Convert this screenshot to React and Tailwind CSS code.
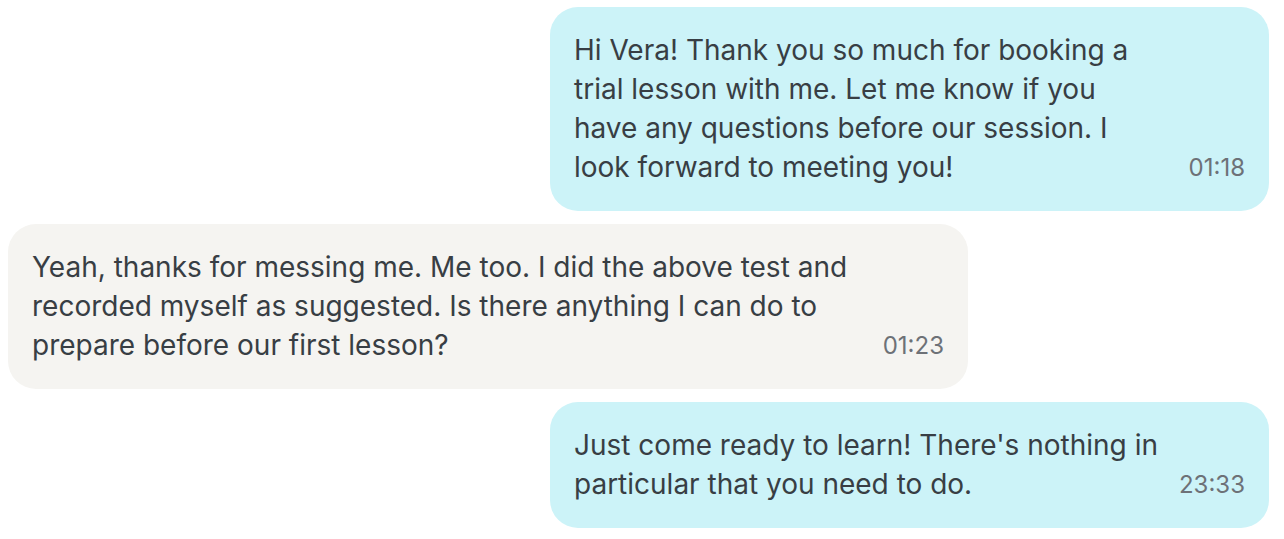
const messages = [
  {
    mine: true,
    time: "01:18",
    lines: [
      "Hi Vera! Thank you so much for booking a",
      "trial lesson with me. Let me know if you",
      "have any questions before our session. I",
      "look forward to meeting you!",
    ],
  },
  {
    mine: false,
    time: "01:23",
    lines: [
      "Yeah, thanks for messing me. Me too. I did the above test and",
      "recorded myself as suggested. Is there anything I can do to",
      "prepare before our first lesson?",
    ],
  },
  {
    mine: true,
    time: "23:33",
    lines: [
      "Just come ready to learn! There's nothing in",
      "particular that you need to do.",
    ],
  },
];

function Bubble({ mine, time, lines }) {
  return (
    <div className={mine ? "flex justify-end" : "flex justify-start"}>
      <div
        className={
          mine
            ? "w-[719px] rounded-[28px] bg-[#ccf3f8] pl-[24px] pr-[24px] py-[24px] flex items-end justify-between"
            : "w-[960px] rounded-[28px] bg-[#f5f4f1] pl-[24px] pr-[24px] py-[24px] flex items-end justify-between"
        }
      >
        <p className="text-[28px] leading-[39px] text-[#383e44]">
          {lines.map((l, i) => (
            <span key={i} className="block whitespace-nowrap">
              {l}
            </span>
          ))}
        </p>
        <span className="text-[24px] leading-[39px] text-[#6d7177]">{time}</span>
      </div>
    </div>
  );
}

export default function App() {
  return (
    <div
      className="bg-white min-h-screen pt-[7px] pl-[8px] pr-[15px] flex flex-col gap-[13px]"
      style={{ fontFamily: "Inter, 'Noto Sans', sans-serif" }}
    >
      {messages.map((m, i) => (
        <Bubble key={i} {...m} />
      ))}
    </div>
  );
}
